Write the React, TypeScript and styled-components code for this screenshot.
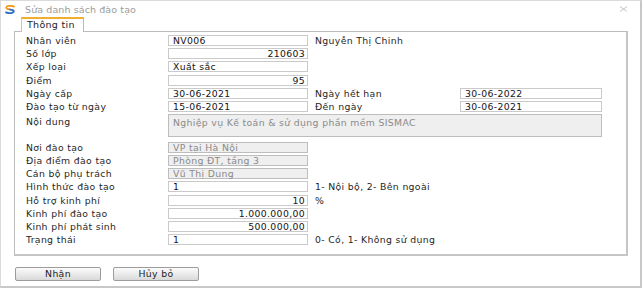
import React from "react";
import styled, { createGlobalStyle } from "styled-components";

const Global = createGlobalStyle`
  html, body { margin: 0; padding: 0; background: #ffffff; }
  body { font-family: "DejaVu Sans", Verdana, sans-serif; }
  * { box-sizing: border-box; }
`;

const Window = styled.div`
  width: 642px;
  height: 288px;
  background: #ffffff;
  border: 1px solid #dadada;
  border-right: 2px solid #c8c8c8;
  border-bottom: 2px solid #c8c8c8;
  display: flex;
  flex-direction: column;
`;

const TitleBar = styled.div`
  height: 16px;
  display: flex;
  align-items: center;
  padding: 0 12px 0 4px;
  gap: 10px;
`;

const Title = styled.span`
  flex: 1;
  font-size: 9.5px;
  letter-spacing: 0.1px;
  color: #9c9c9c;
  line-height: 12px;
  padding-top: 1px;
`;

const Body = styled.div`
  padding: 0 12px 0 13px;
  display: flex;
  flex-direction: column;
`;

const TabBar = styled.div`
  height: 14px;
  padding-left: 7px;
  display: flex;
  align-items: flex-end;
`;

const Tab = styled.div`
  height: 15px;
  margin-bottom: -1px;
  position: relative;
  z-index: 1;
  padding: 0 8px 0 5px;
  background: #ffffff;
  border: 1px solid #b9b9b9;
  border-top: 2px solid #f2ae2e;
  border-left: 1px solid #e9c278;
  border-bottom: none;
  font-size: 9.5px;
  letter-spacing: 0.3px;
  color: #1e1e1e;
  line-height: 12px;
`;

const Panel = styled.div`
  width: 614px;
  background: #ffffff;
  border: 1px solid #bcbcbc;
  border-right: 2px solid #c6c6c6;
  border-bottom: 2px solid #c6c6c6;
  padding: 3px 0 9px 11px;
  display: flex;
  flex-direction: column;
  gap: 2.2px;
`;

const Row = styled.div<{ $tall?: boolean }>`
  display: grid;
  grid-template-columns: 142px 140px 152px 142px;
  height: ${(p) => (p.$tall ? "23px" : "11px")};
  align-items: ${(p) => (p.$tall ? "start" : "center")};
  margin-bottom: ${(p) => (p.$tall ? "2.5px" : "0")};
`;

const Label = styled.div<{ $right?: boolean; $top?: boolean }>`
  font-size: 9.3px;
  letter-spacing: 0.35px;
  line-height: 11px;
  color: #1f1f1f;
  white-space: nowrap;
  padding-left: ${(p) => (p.$right ? "7px" : "0")};
  padding-top: ${(p) => (p.$top ? "2px" : "0")};
`;

const Field = styled.div<{ $align?: "left" | "right"; $disabled?: boolean; $span?: boolean }>`
  height: ${(p) => (p.$span ? "23px" : "11px")};
  grid-column: ${(p) => (p.$span ? "2 / 5" : "auto")};
  border: 1px solid ${(p) => (p.$disabled ? "#bdbdbd" : "#cacaca")};
  background: ${(p) => (p.$disabled ? "#efefef" : "#ffffff")};
  color: ${(p) => (p.$disabled ? "#8a8a8a" : "#141414")};
  font-size: 9.3px;
  letter-spacing: 0.35px;
  line-height: 9px;
  display: flex;
  align-items: ${(p) => (p.$span ? "flex-start" : "center")};
  justify-content: ${(p) => (p.$align === "right" ? "flex-end" : "flex-start")};
  padding: ${(p) => (p.$span ? "3px 3px 0 4px" : "0 2px 0 4px")};
  white-space: nowrap;
  overflow: visible;
`;

const ButtonRow = styled.div`
  display: flex;
  gap: 12px;
  margin-top: 11px;
  padding-left: 1px;
`;

const Button = styled.button`
  width: 86px;
  height: 14px;
  padding: 0;
  border: 1px solid #9c9c9c;
  border-radius: 2px;
  background: linear-gradient(#fbfbfb, #e9e9e9 55%, #d9d9d9);
  font-family: "DejaVu Sans", Verdana, sans-serif;
  font-size: 9.3px;
  letter-spacing: 0.35px;
  line-height: 12px;
  color: #222222;
`;

const Logo = () => (
  <svg width="10" height="9" viewBox="0 0 10 9">
    <path d="M9 1.6 C6 0.2 1.5 0.6 1.2 2.6 C1 3.8 3 4.2 5 4.3" stroke="#f39a1e" strokeWidth="1.8" fill="none" strokeLinecap="round" />
    <path d="M1 7.4 C4 8.8 8.5 8.2 8.8 6.4 C9 5.2 7 4.8 5 4.7" stroke="#2b6fc2" strokeWidth="1.8" fill="none" strokeLinecap="round" />
  </svg>
);

const CloseIcon = () => (
  <svg width="9" height="6" viewBox="0 0 9 6">
    <path d="M1 0.5 L8 5.5 M8 0.5 L1 5.5" stroke="#c4c4c4" strokeWidth="1" />
  </svg>
);

type RowDef = {
  label: string;
  value: string;
  align?: "left" | "right";
  disabled?: boolean;
  rightLabel?: string;
  rightValue?: string;
};

const rowsTop: RowDef[] = [
  { label: "Nhân viên", value: "NV006", rightLabel: "Nguyễn Thị Chinh" },
  { label: "Số lớp", value: "210603", align: "right" },
  { label: "Xếp loại", value: "Xuất sắc" },
  { label: "Điểm", value: "95", align: "right" },
  { label: "Ngày cấp", value: "30-06-2021", rightLabel: "Ngày hết hạn", rightValue: "30-06-2022" },
  { label: "Đào tạo từ ngày", value: "15-06-2021", rightLabel: "Đến ngày", rightValue: "30-06-2021" },
];

const rowsBottom: RowDef[] = [
  { label: "Nơi đào tạo", value: "VP tại Hà Nội", disabled: true },
  { label: "Địa điểm đào tạo", value: "Phòng ĐT, tầng 3", disabled: true },
  { label: "Cán bộ phụ trách", value: "Vũ Thị Dung", disabled: true },
  { label: "Hình thức đào tạo", value: "1", rightLabel: "1- Nội bộ, 2- Bên ngoài" },
  { label: "Hỗ trợ kinh phí", value: "10", align: "right", rightLabel: "%" },
  { label: "Kinh phí đào tạo", value: "1.000.000,00", align: "right" },
  { label: "Kinh phí phát sinh", value: "500.000,00", align: "right" },
  { label: "Trạng thái", value: "1", rightLabel: "0- Có, 1- Không sử dụng" },
];

const FormRow = ({ r }: { r: RowDef }) => (
  <Row>
    <Label>{r.label}</Label>
    <Field $align={r.align} $disabled={r.disabled}>{r.value}</Field>
    <Label $right>{r.rightLabel ?? ""}</Label>
    {r.rightValue ? <Field>{r.rightValue}</Field> : <span />}
  </Row>
);

export default function App() {
  return (
    <>
      <Global />
      <Window>
        <TitleBar>
          <Logo />
          <Title>Sửa danh sách đào tạo</Title>
          <CloseIcon />
        </TitleBar>
        <Body>
          <TabBar>
            <Tab>Thông tin</Tab>
          </TabBar>
          <Panel>
            {rowsTop.map((r) => (
              <FormRow key={r.label} r={r} />
            ))}
            <Row $tall>
              <Label $top>Nội dung</Label>
              <Field $span $disabled>Nghiệp vụ Kế toán &amp; sử dụng phần mềm SISMAC</Field>
            </Row>
            {rowsBottom.map((r) => (
              <FormRow key={r.label} r={r} />
            ))}
          </Panel>
          <ButtonRow>
            <Button>Nhận</Button>
            <Button>Hủy bỏ</Button>
          </ButtonRow>
        </Body>
      </Window>
    </>
  );
}
